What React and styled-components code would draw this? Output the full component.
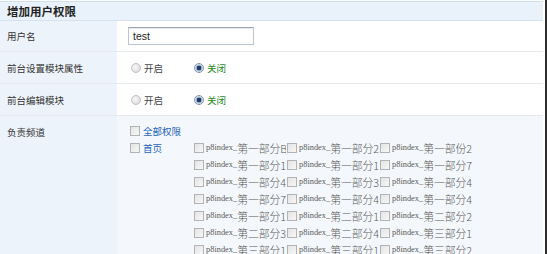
import React from "react";
import styled, { createGlobalStyle } from "styled-components";

const Global = createGlobalStyle`
  html, body { margin: 0; padding: 0; background: #ffffff; }
  body { font-family: "Noto Sans CJK SC", "Noto Sans", sans-serif; color: #333; }
`;

const Frame = styled.div`
  width: 543px;
  padding-right: 2px;
  border-right: 2px solid #2e2e2e;
  height: 254px;
  overflow: hidden;
  padding-top: 1px;
`;

const Header = styled.div`
  height: 18px;
  border-top: 1px solid #cfdff0;
  border-bottom: 1px solid #d6e2ee;
  background: #e9f2fb;
  display: flex;
  align-items: center;
  padding-left: 7px;
  font-size: 11.5px;
  font-weight: bold;
  color: #222;
`;

const Row = styled.div`
  display: grid;
  grid-template-columns: 117px 1fr;
  height: ${(p) => p.$h}px;
  border-bottom: 1px solid #e4e9ef;
`;

const Label = styled.div`
  background: #edf3fa;
  padding-left: 7px;
  font-size: 9.5px;
  color: #333;
  display: flex;
  align-items: ${(p) => (p.$top ? "flex-start" : "center")};
  padding-top: ${(p) => (p.$top ? "9px" : "0")};
`;

const Value = styled.div`
  background: #ffffff;
  display: flex;
  align-items: center;
  padding-left: ${(p) => p.$pl || 11}px;
`;

const TextInput = styled.div`
  width: 120px;
  height: 16px;
  border: 1px solid #bcc6cf;
  border-top-color: #9aa5b0;
  box-shadow: inset 0 1px 1px rgba(0, 0, 0, 0.08);
  font-size: 10.5px;
  font-family: "Liberation Sans", Arial, sans-serif;
  color: #222;
  display: flex;
  align-items: center;
  padding-left: 4px;
  background: #fff;
`;

const RadioGroup = styled.div`
  display: flex;
  align-items: center;
`;

const RadioItem = styled.label`
  display: flex;
  align-items: center;
  width: ${(p) => p.$w}px;
  font-size: 9.5px;
  color: ${(p) => (p.$green ? "#1b8a1b" : "#444")};
`;

const RadioDot = styled.span`
  width: 8px;
  height: 8px;
  border-radius: 50%;
  margin-right: 3px;
  border: 1px solid ${(p) => (p.$on ? "#7e95ad" : "#c4c4c4")};
  background: ${(p) =>
    p.$on
      ? "radial-gradient(circle at 50% 50%, #1d3a63 0 2px, #8fa6c0 2.5px, #e6edf5 4px)"
      : "radial-gradient(circle at 40% 40%, #f8f8f8, #d4d4d4)"};
`;

const Box = styled.span`
  display: inline-block;
  flex: none;
  width: 8px;
  height: 8px;
  border: 1px solid #b3b3b3;
  background: linear-gradient(135deg, #e4e4e4, #f7f7f7);
  margin-right: ${(p) => p.$mr || 3}px;
`;

const Channels = styled.div`
  background: #f4f8fc;
  padding: 6px 0 0 13px;
  display: flex;
  flex-direction: column;
`;

const Line = styled.div`
  display: flex;
  align-items: flex-start;
`;

const Check = styled.div`
  height: 17px;
  display: flex;
  align-items: center;
  width: ${(p) => (p.$w ? `${p.$w}px` : "auto")};
  font-size: 9.5px;
  color: #2563b8;
  flex: none;
`;

const Grid = styled.div`
  display: grid;
  grid-template-columns: repeat(3, 93px);
  grid-auto-rows: 17px;
`;

const Item = styled.div`
  display: flex;
  align-items: center;
  overflow: hidden;
  white-space: nowrap;
  width: 92px;
  color: #5a5a5a;
`;

const Latin = styled.span`
  font-family: "Liberation Serif", serif;
  font-size: 8.4px;
  color: #5a5a5a;
`;

const Cjk = styled.span`
  font-family: "Noto Sans CJK SC", sans-serif;
  font-size: 10.8px;
  font-weight: 300;
  color: #5a5a5a;
`;

const items = [
  ["第一部分B", "第一部分2", "第一部份2"],
  ["第一部分1", "第一部分1", "第一部分7"],
  ["第一部分4", "第一部分3", "第一部分4"],
  ["第一部分7", "第一部分4", "第一部分4"],
  ["第一部分1", "第二部分1", "第二部分2"],
  ["第二部分3", "第二部分4", "第三部分1"],
  ["第三部分1", "第三部分1", "第三部分2"],
].flat();

const Radios = () => (
  <RadioGroup>
    <RadioItem $w={63}>
      <RadioDot />
      开启
    </RadioItem>
    <RadioItem $w={60} $green>
      <RadioDot $on />
      关闭
    </RadioItem>
  </RadioGroup>
);

export default function App() {
  return (
    <>
      <Global />
      <Frame>
        <Header>增加用户权限</Header>
        <Row $h={30}>
          <Label>用户名</Label>
          <Value>
            <TextInput>test</TextInput>
          </Value>
        </Row>
        <Row $h={31}>
          <Label>前台设置模块属性</Label>
          <Value $pl={14}>
            <Radios />
          </Value>
        </Row>
        <Row $h={31}>
          <Label>前台编辑模块</Label>
          <Value $pl={14}>
            <Radios />
          </Value>
        </Row>
        <Row $h={160}>
          <Label $top>负责频道</Label>
          <Channels>
            <Check>
              <Box />
              全部权限
            </Check>
            <Line>
              <Check $w={64}>
                <Box />
                首页
              </Check>
              <Grid>
                {items.map((t, i) => (
                  <Item key={i}>
                    <Box $mr={2} />
                    <Latin>p8index_</Latin>
                    <Cjk>{t}栏目</Cjk>
                  </Item>
                ))}
              </Grid>
            </Line>
          </Channels>
        </Row>
      </Frame>
    </>
  );
}
